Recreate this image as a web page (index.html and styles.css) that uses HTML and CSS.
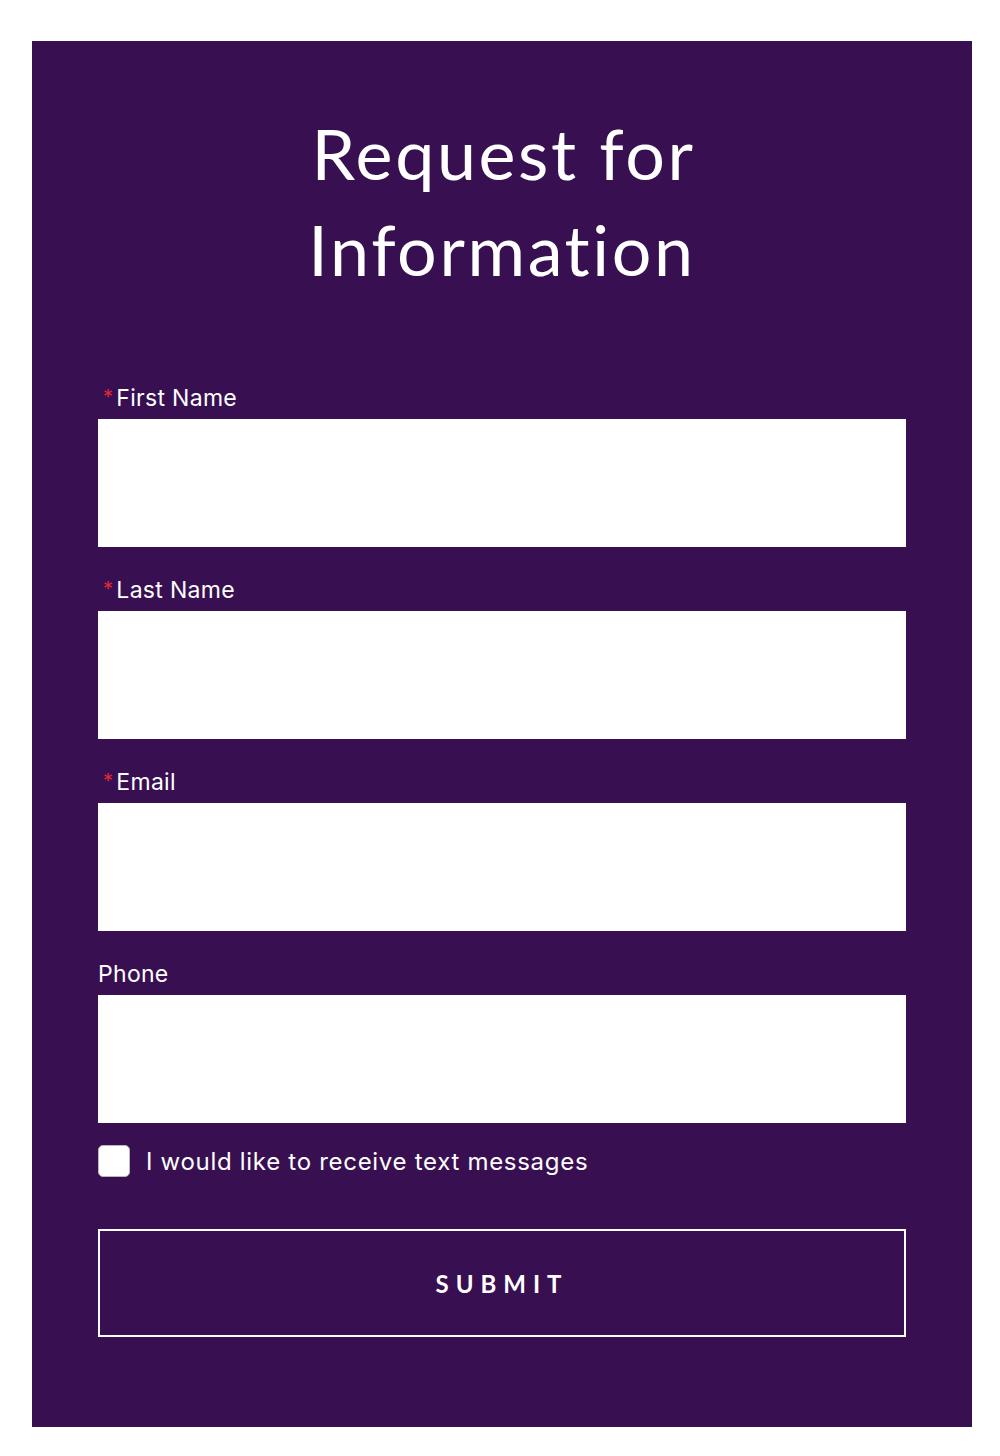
FILE: index.html
```html
<!DOCTYPE html>
<html>
<head>
<meta charset="utf-8">
<link rel="stylesheet" href="styles.css">
</head>
<body>
<div class="panel">
  <h1 class="title">Request for Information</h1>
  <form class="form">
    <div class="field">
      <label class="label"><span class="req">*</span>First Name</label>
      <div class="input"></div>
    </div>
    <div class="field">
      <label class="label"><span class="req">*</span>Last Name</label>
      <div class="input"></div>
    </div>
    <div class="field">
      <label class="label"><span class="req">*</span>Email</label>
      <div class="input"></div>
    </div>
    <div class="field">
      <label class="label">Phone</label>
      <div class="input"></div>
    </div>
    <div class="check">
      <span class="box"></span>
      <span class="check-text">I would like to receive text messages</span>
    </div>
    <div class="submit">SUBMIT</div>
  </form>
</div>
</body>
</html>
```
FILE: styles.css
```css
html, body { margin: 0; padding: 0; background: #fff; }
body { padding: 41px 28px 29px 32px; }
.panel {
  background: #381052;
  padding: 64px 66px 90px 66px;
}
.title {
  margin: 0 auto 83px;
  max-width: 480px;
  font-family: Lato, "Open Sans", sans-serif;
  font-weight: 400;
  font-size: 70px;
  line-height: 96px;
  color: #fff;
  text-align: center;
  letter-spacing: 2.6px;
  text-indent: 3px;
}
.form { display: flex; flex-direction: column; }
.field { display: flex; flex-direction: column; margin-bottom: 25px; }
.label {
  display: block;
  height: 30px;
  padding-top: 2px;
  font-family: Inter, "Noto Sans", sans-serif;
  font-size: 23px;
  line-height: 32px;
  letter-spacing: 0.3px;
  color: #fff;
  margin-bottom: 7px;
}
.req { color: #e2282e; font-size: 20px; line-height: 0; margin: 0 3px 0 5px; vertical-align: 2px; }
.input { height: 128px; background: #fff; }
.check {
  display: flex; align-items: center; gap: 16px;
  margin-top: -3px;
}
.box {
  width: 30px; height: 30px; background: #fff;
  border: 1px solid #b8b8b8; border-radius: 5px;
}
.check-text {
  font-family: Inter, "Noto Sans", sans-serif;
  font-size: 24px;
  letter-spacing: 0.7px;
  color: #fff;
}
.submit {
  margin-top: 52px;
  height: 104px;
  border: 2px solid #fff;
  display: flex; align-items: center; justify-content: center;
  font-family: Lato, sans-serif;
  font-weight: 700;
  font-size: 24px;
  letter-spacing: 7px;
  color: #fff;
}
```
